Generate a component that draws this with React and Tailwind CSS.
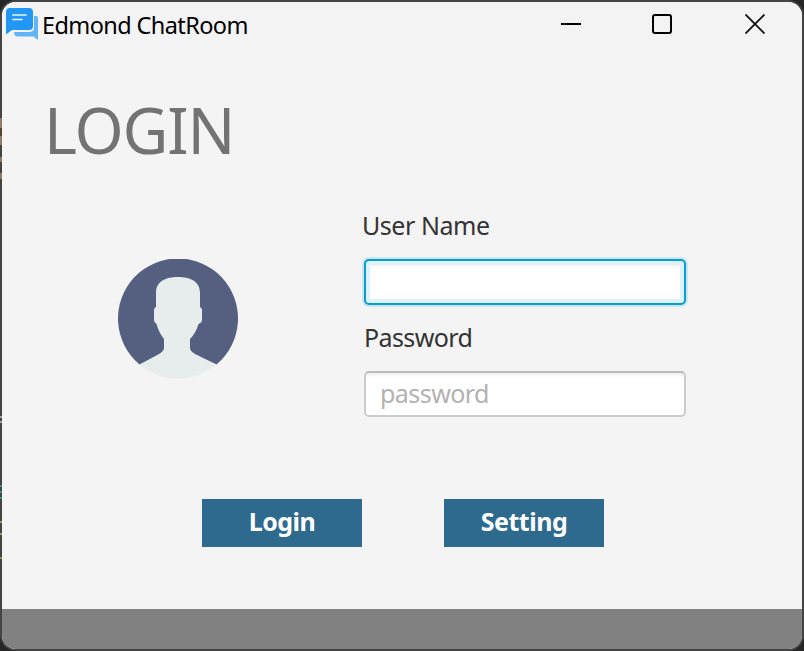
function ChatLogo() {
  return (
    <svg className="block h-8 w-8" viewBox="0 0 32 32">
      <path d="M28 8h2Q32 8 32 10v22l-4.500-3.500H12q-4 0-4-4.500h15q5 0 5-4z" fill="#64b5f6" />
      <path d="M4 0h19q4 0 4 4v14q0 4-4 4H6l-6 4.500V4q0-4 4-4z" fill="#2196f3" />
      <path d="M7 7h13M7 11.500h9" stroke="#e8f5ff" strokeWidth="1.700" strokeLinecap="round" />
    </svg>
  );
}

function TitleBar() {
  return (
    <header className="flex h-[47px] bg-[#f3f3f3] pl-1">
      <div className="pt-[6px]"><ChatLogo /></div>
      <h1 className="ml-1 mt-[2px] w-[519px] whitespace-nowrap text-[23.500px] leading-[43px] tracking-[-0.6px] text-black">Edmond ChatRoom</h1>
      <div className="flex pt-3">
        <svg className="h-5 w-5" viewBox="0 0 20 20" shapeRendering="crispEdges"><path d="M0 10h20" stroke="#000" strokeWidth="2" /></svg>
        <svg className="ml-[71px] h-5 w-5" viewBox="0 0 20 20" fill="none"><rect x="1" y="1" width="18" height="18" rx="2" stroke="#000" strokeWidth="2" /></svg>
        <svg className="ml-[73px] h-5 w-5" viewBox="0 0 20 20"><path d="M.5 .5l19 19M19.500 .5l-19 19" stroke="#111" strokeWidth="1.800" /></svg>
      </div>
    </header>
  );
}

function Avatar() {
  return (
    <svg className="block h-[120px] w-[120px]" viewBox="0 0 120 120">
      <path d="M21.500 105.500A60 60 0 1 1 98.500 105.500L60 90z" fill="#556080" />
      <path d="M21.500 105.500L41 95Q46 92 46 89V80Q41 74 38.500 65Q36 63.500 36 61V51Q36 49 38 48V34C38 22 48 18 60 18S82 22 82 34V48Q84 49 84 51V61Q84 63.500 80.500 65Q78 74 72 80V89Q72 92 77 95L98.500 105.500A60 60 0 0 1 21.500 105.500z" fill="#e7eced" />
    </svg>
  );
}

// Slivers of the editor behind the window, visible along its left border.
function BackdropEdge() {
  return (
    <svg className="absolute left-0 top-0 h-[651px] w-[2px]" viewBox="0 0 2 651" shapeRendering="crispEdges">
      <path d="M1 118v27M1 157v5M1 173v6" stroke="#8d7a66" strokeWidth="2" />
      <path d="M1 128v8" stroke="#57443a" strokeWidth="2" />
      <path d="M1 416v2M1 421v2" stroke="#a3a3b3" strokeWidth="2" />
      <path d="M1 485v2M1 491v2M1 497v2" stroke="#349488" strokeWidth="2" />
      <path d="M1 521v2M1 533v2" stroke="#aaa263" strokeWidth="2" />
      <path d="M1 557v2" stroke="#7b9d42" strokeWidth="2" />
    </svg>
  );
}

export default function App() {
  return (
    <div className="relative h-[651px] w-[804px] overflow-hidden bg-[#262626] font-['Noto_Sans','Open_Sans',sans-serif]">
      <div className="h-[651px] w-[804px] overflow-hidden rounded-[16px] bg-[#444444] p-[2px]">
        <div className="flex h-[647px] w-[800px] flex-col overflow-hidden rounded-[14px] bg-[#f4f4f4]">
          <TitleBar />
          <main className="h-[560px]">
            <h2 className="ml-[42px] pt-[40px] text-[63px] leading-[81px] tracking-[-1.2px] text-[#737373]">LOGIN</h2>
            <div className="flex h-[245px]">
              <div className="ml-[116px] mt-[89px] w-[246px]"><Avatar /></div>
              <form className="w-[322px] pt-[35px]">
                <label className="-ml-[2px] block whitespace-nowrap text-[25px] leading-[40px] tracking-[-0.45px] text-[#333333]">User Name</label>
                <input className="mt-[14px] block h-[46px] w-[322px] rounded-[5px] border-2 border-[#039ed3] bg-white px-4 shadow-[0_0_0_2px_#cfe5ed,inset_0_0_0_4px_#dff2fb,inset_0_8px_4px_-2px_#f4f4f4] outline-none" />
                <label className="mt-[12px] block whitespace-nowrap text-[25px] leading-[40px] tracking-[-0.6px] text-[#333333]">Password</label>
                <input placeholder="password" className="mt-[14px] block h-[46px] w-[322px] rounded-[5px] border-2 border-[#cccccc] border-t-[#bababa] bg-white px-[14px] pb-[2px] text-[25px] leading-[40px] tracking-[-0.55px] shadow-[inset_0_4px_4px_-2px_#ededed] outline-none placeholder:text-[#b2b2b2]" />
              </form>
            </div>
            <div className="ml-[200px] mt-[84px] flex gap-[82px]">
              <button className="h-12 w-[160px] bg-[#2d6a8e] pb-1 text-[25px] font-bold leading-[44px] tracking-[-0.5px] text-white">Login</button>
              <button className="h-12 w-[160px] bg-[#2d6a8e] pb-1 text-[25px] font-bold leading-[44px] tracking-[-0.5px] text-white">Setting</button>
            </div>
          </main>
          <footer className="h-10 bg-[#818181]" />
        </div>
      </div>
      <BackdropEdge />
    </div>
  );
}
